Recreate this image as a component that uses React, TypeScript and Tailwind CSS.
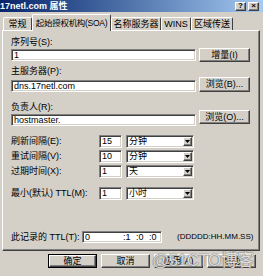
import React from 'react';

const font = '"Liberation Sans", "Noto Sans CJK SC", sans-serif';

const sunken =
  'bg-white border border-t-[#808080] border-l-[#808080] border-b-white border-r-white shadow-[inset_1px_1px_0_#404040,inset_-1px_-1px_0_#d4d0c8]';
const raised =
  'bg-[#d4d0c8] border border-t-white border-l-white border-b-[#404040] border-r-[#404040] shadow-[inset_-1px_-1px_0_#808080]';

const tabs = [
  { label: '常规', w: 'w-[29px]', text: 'text-[9px]' },
  { label: '起始授权机构(SOA)', w: 'w-[79px]', text: 'text-[8.5px] tracking-[-0.3px]', active: true },
  { label: '名称服务器', w: 'w-[50px]', text: 'text-[9px]' },
  { label: 'WINS', w: 'w-[30px]', text: 'text-[9px]' },
  { label: '区域传送', w: 'w-[42px]', text: 'text-[9px]' },
];

const Btn: React.FC<{ label: string; className?: string }> = ({ label, className = '' }) => (
  <div className={`${raised} flex items-center justify-center text-[9px] leading-none text-black whitespace-nowrap ${className}`}>
    {label}
  </div>
);

const Select: React.FC<{ value: string }> = ({ value }) => (
  <div className={`${sunken} w-[68px] h-[13px] flex items-center justify-between pl-[2px] pr-[1px]`}>
    <span className="text-[9px] leading-none">{value}</span>
    <div className={`${raised} w-[9px] h-[9px] flex items-center justify-center`}>
      <svg width="5" height="3" viewBox="0 0 5 3">
        <path d="M0 0h5L2.5 3z" fill="#000" />
      </svg>
    </div>
  </div>
);

const IntervalRow: React.FC<{ label: string; num: string; unit: string; className?: string }> = ({
  label,
  num,
  unit,
  className = '',
}) => (
  <div className={`flex items-center h-[13px] ${className}`}>
    <span className="w-[88px] text-[9px] leading-none whitespace-nowrap">{label}</span>
    <div className={`${sunken} w-[23px] h-[13px] flex items-center pl-[2px] text-[9px] leading-none`}>{num}</div>
    <div className="ml-[4px]">
      <Select value={unit} />
    </div>
  </div>
);

export default function App() {
  return (
    <div
      className="w-[263px] h-[276px] bg-[#d4d0c8] overflow-hidden relative flex flex-col text-black"
      style={{ fontFamily: font }}
    >
      {/* title bar */}
      <div className="h-[12px] flex items-center justify-between bg-gradient-to-r from-[#0a246a] to-[#a6caf0]">
        <span className="text-white font-bold text-[9px] leading-none whitespace-nowrap">17netl.com 属性</span>
        <div className="flex gap-[2px] mr-[4px]">
          <div className={`${raised} w-[11px] h-[9px] flex items-center justify-center text-[8px] font-bold leading-none`}>?</div>
          <div className={`${raised} w-[11px] h-[9px] flex items-center justify-center text-[8px] font-bold leading-none`}>×</div>
        </div>
      </div>

      {/* tabs */}
      <div className="h-[18px] flex items-end pl-[3px] relative z-10">
        {tabs.map((t) => (
          <div
            key={t.label}
            className={`${t.w} ${t.text} flex items-center justify-center leading-none whitespace-nowrap border-t border-l border-r border-t-white border-l-white border-r-[#404040] rounded-t-[2px] bg-[#d4d0c8] ${
              t.active ? 'h-[17px] mb-[-1px]' : 'h-[13px]'
            }`}
          >
            {t.label}
          </div>
        ))}
      </div>

      {/* panel */}
      <div className="ml-[2px] mr-[3px] h-[221px] border border-t-white border-l-white border-r-[#404040] border-b-[#404040] shadow-[inset_-1px_-1px_0_#808080] pl-[8px] pt-[6px] flex flex-col">
        <span className="h-[11px] text-[9px] leading-[11px]">序列号(S):</span>
        <div className="flex items-start h-[14px]">
          <div className={`${sunken} w-[185px] h-[12px] mt-[1px] flex items-center pl-[2px] text-[9px] leading-none`}>1</div>
          <Btn label="增量(I)" className="ml-[3px] w-[51px] h-[14px]" />
        </div>

        <span className="mt-[4px] h-[11px] text-[9px] leading-[11px]">主服务器(P):</span>
        <div className="flex items-start h-[15px]">
          <div className={`${sunken} w-[185px] h-[12px] mt-[3px] flex items-center pl-[2px] text-[9px] leading-none`}>
            dns.17netl.com
          </div>
          <Btn label="浏览(B)..." className="ml-[3px] w-[51px] h-[15px]" />
        </div>

        <span className="mt-[10px] h-[11px] text-[9px] leading-[11px]">负责人(R):</span>
        <div className="flex items-start h-[16px] -mt-[3px]">
          <div className={`${sunken} w-[185px] h-[12px] mt-[4px] flex items-center pl-[2px] text-[9px] leading-none`}>
            hostmaster.
          </div>
          <Btn label="浏览(O)..." className="ml-[3px] w-[51px] h-[14px]" />
        </div>

        <IntervalRow className="mt-[9px]" label="刷新间隔(E):" num="15" unit="分钟" />
        <IntervalRow className="mt-[2px]" label="重试间隔(V):" num="10" unit="分钟" />
        <IntervalRow className="mt-[2px]" label="过期时间(X):" num="1" unit="天" />
        <IntervalRow className="mt-[9px]" label="最小(默认) TTL(M):" num="1" unit="小时" />

        <div className="mt-[31px] flex items-center h-[12px]">
          <span className="w-[71px] text-[9px] leading-none whitespace-nowrap">此记录的 TTL(T):</span>
          <div className={`${sunken} w-[80px] h-[12px] flex items-center pl-[2px] text-[9px] leading-none`}>
            <span className="w-[38px]">0</span>
            <span className="w-[13px]">:1</span>
            <span className="w-[13px]">:0</span>
            <span>:0</span>
          </div>
          <span className="ml-[15px] text-[8px] leading-none">(DDDDD:HH.MM.SS)</span>
        </div>
      </div>

      {/* buttons */}
      <div className="flex gap-[4px] ml-[48px] mt-[3px]">
        <div className="w-[49px] h-[14px] border border-black flex">
          <Btn label="确定" className="flex-1" />
        </div>
        <Btn label="取消" className="w-[49px] h-[14px]" />
        <Btn label="应用(A)" className="w-[49px] h-[14px]" />
        <Btn label="帮助" className="w-[49px] h-[14px]" />
      </div>

      {/* watermark */}
      <div
        className="absolute left-[152px] top-[252px] text-[17px] leading-none text-white/80 tracking-[-0.5px]"
        style={{ textShadow: '0 0 1px #555, 0 0 1px #555' }}
      >
        @51CTO博客
      </div>
    </div>
  );
}
